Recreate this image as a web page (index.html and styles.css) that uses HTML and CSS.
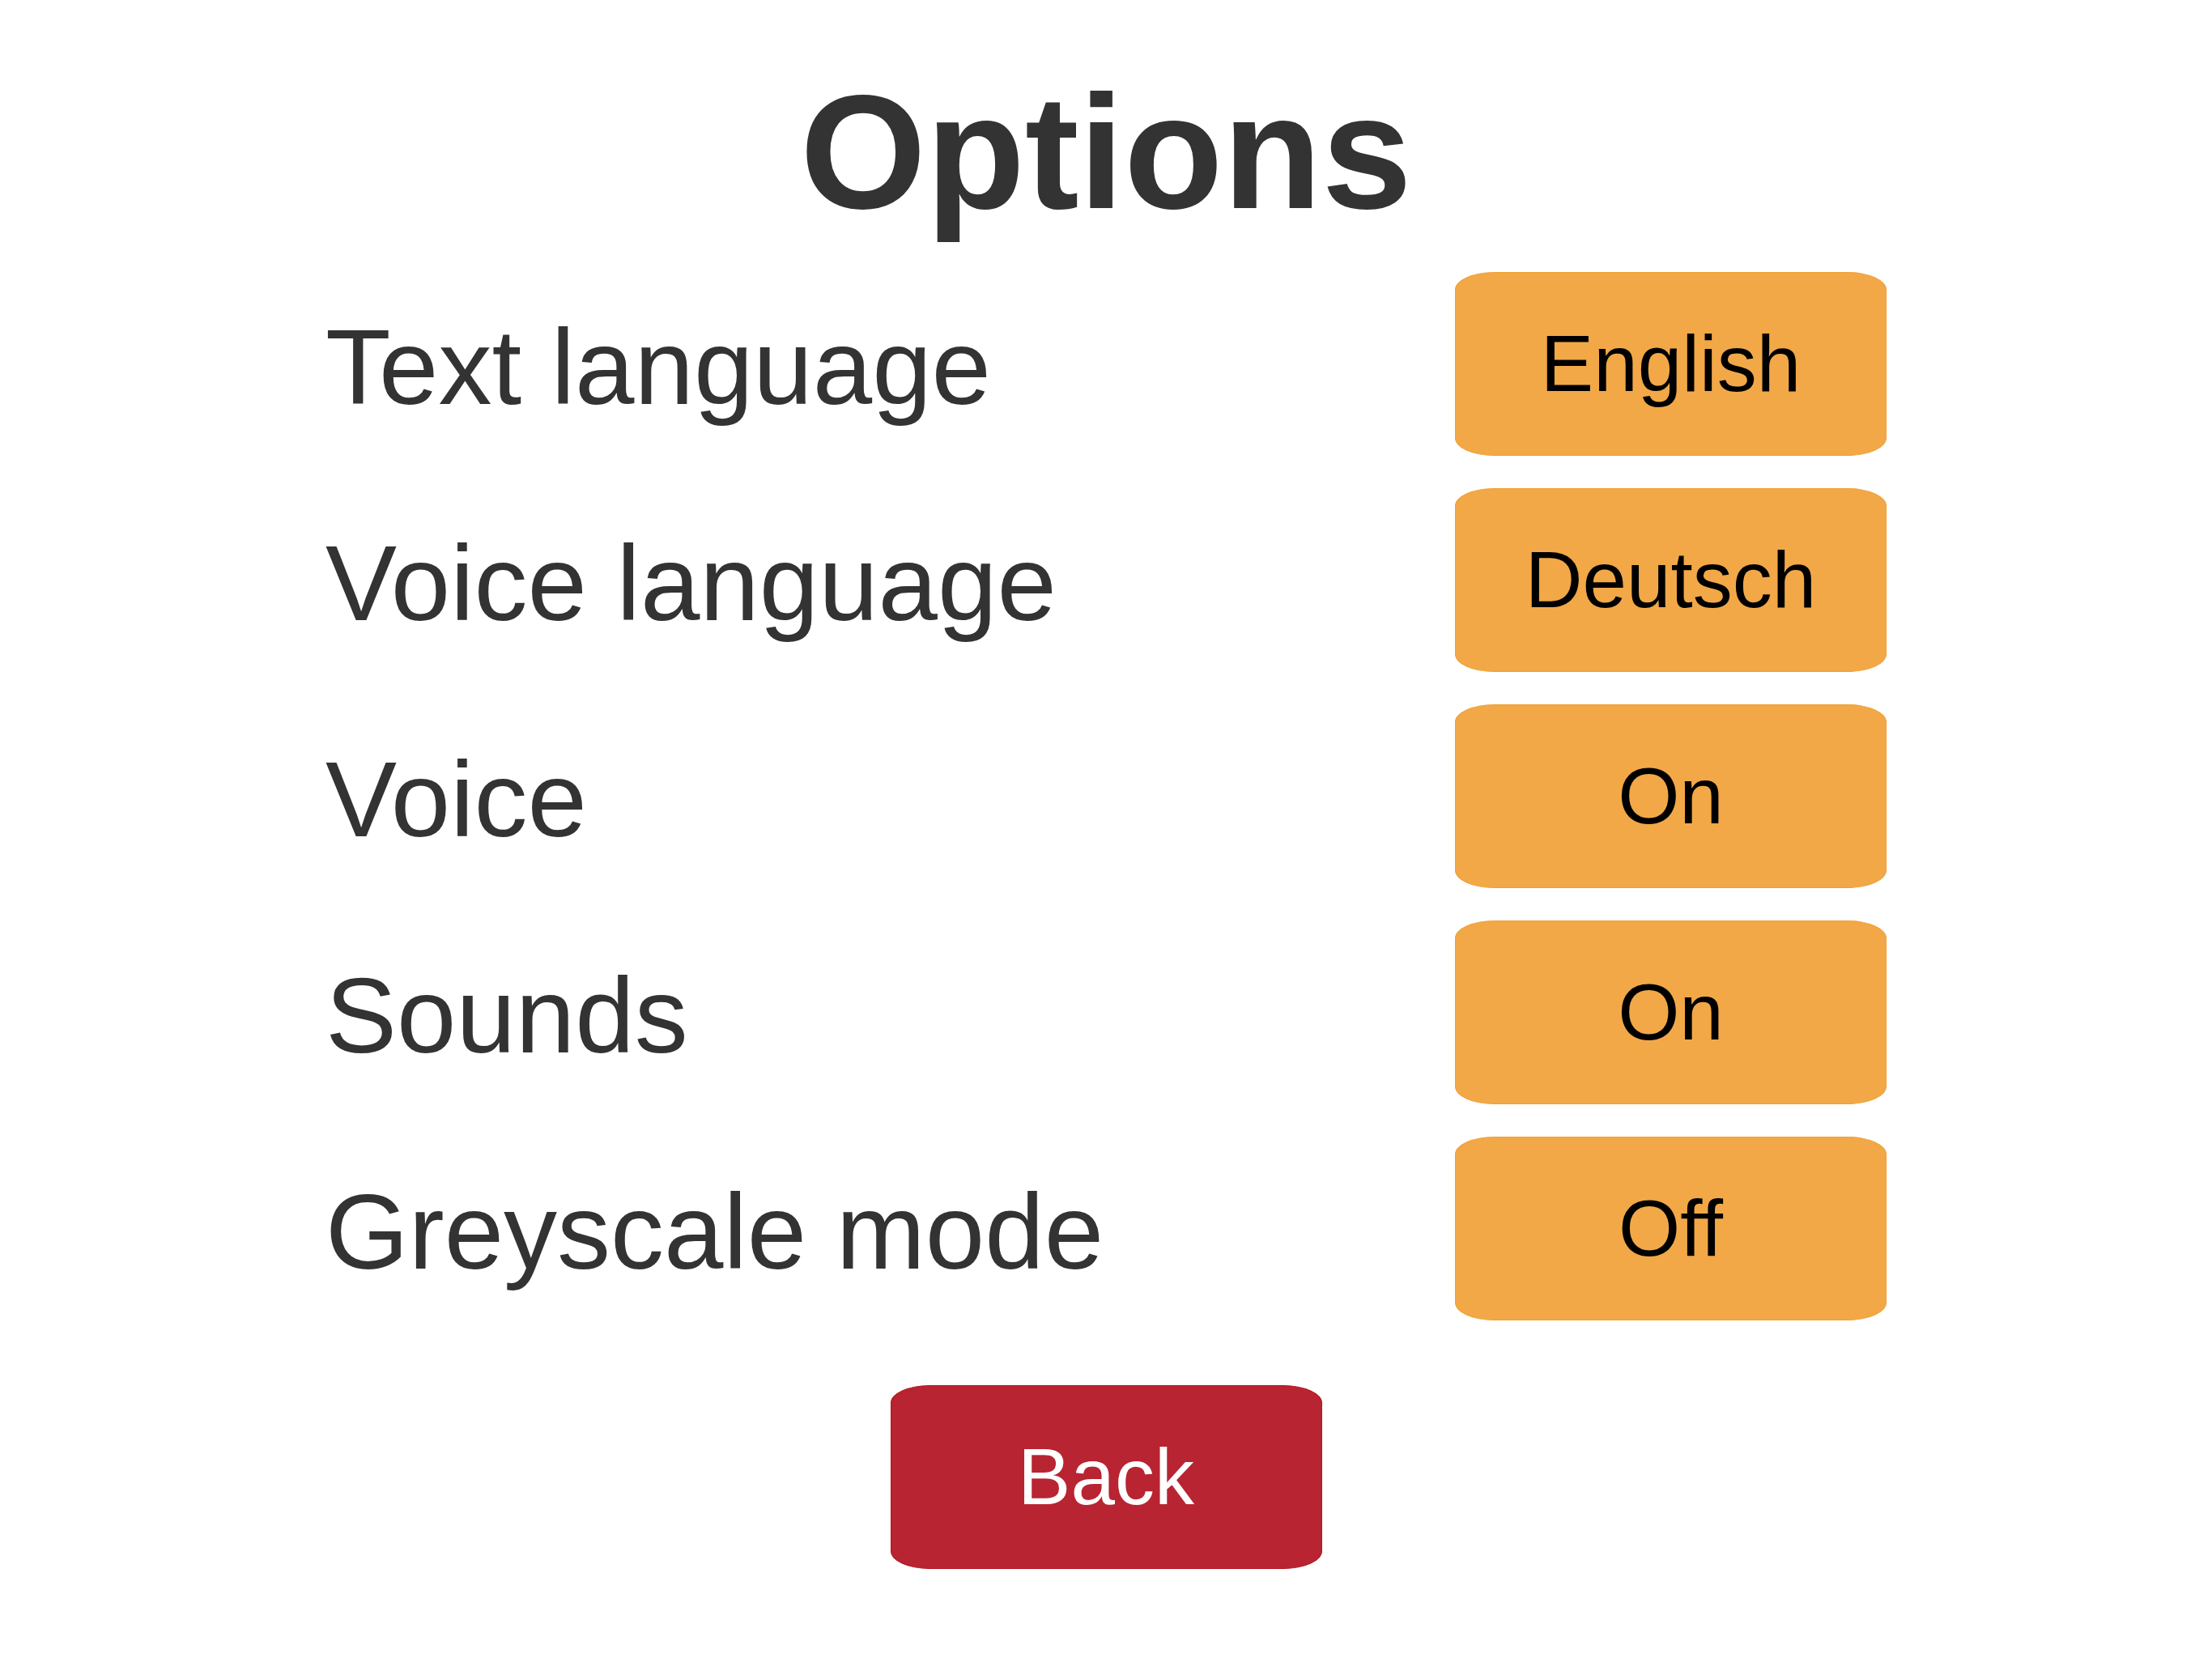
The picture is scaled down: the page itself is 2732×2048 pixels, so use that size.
FILE: index.html
```html
<!DOCTYPE html>
<html lang="en">
<head>
  <meta charset="UTF-8">
  <meta name="viewport" content="width=device-width, initial-scale=1.0">
  <title>Options</title>
  <link rel="stylesheet" href="styles.css">
</head>
<body>

  <h1 class="title">Options</h1>

  <main class="options">
    <div class="row">
      <span class="label">Text language</span>
      <button class="option">English</button>
    </div>
    <div class="row">
      <span class="label">Voice language</span>
      <button class="option">Deutsch</button>
    </div>
    <div class="row">
      <span class="label">Voice</span>
      <button class="option">On</button>
    </div>
    <div class="row">
      <span class="label">Sounds</span>
      <button class="option">On</button>
    </div>
    <div class="row">
      <span class="label">Greyscale mode</span>
      <button class="option">Off</button>
    </div>
  </main>

  <div class="footer">
    <button class="back">Back</button>
  </div>

</body>
</html>
```

FILE: styles.css
```css
body {
  font-family: 'Liberation Sans', Arial, sans-serif;
  background-color: #fff;
  color: #333;
  margin: 0;
  padding: 0;
}

.title {
  margin: 88px 0 0;
  font-size: 200px;
  line-height: 200px;
  font-weight: bold;
  text-align: center;
  color: #333;
}

.options {
  width: 1928px;
  margin: 48px auto 0;
  display: flex;
  flex-direction: column;
  gap: 40px;
}

.row {
  display: flex;
  justify-content: space-between;
  align-items: center;
}

.label {
  font-size: 132px;
  line-height: 1;
  padding-top: 8px;
  color: #333;
}

.option, .back {
  width: 533px;
  height: 227px;
  border-radius: 48px / 22px;
  font-family: 'Liberation Sans', Arial, sans-serif;
  font-size: 98px;
  cursor: pointer;
  padding: 0;
}

.option {
  background-color: #f2a847;
  border: 1px solid #f0a030;
  color: #000;
}

.footer {
  display: flex;
  justify-content: center;
  margin-top: 80px;
}

.back {
  background-color: #b82431;
  border: 1px solid #b5121d;
  color: #fff;
}
```
